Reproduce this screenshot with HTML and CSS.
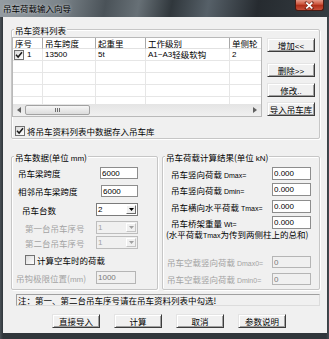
FILE: index.html
```html
<!DOCTYPE html>
<html>
    <head>
        <meta charset="utf-8" />
        <title>吊车荷载输入向导</title>
        <link rel="stylesheet" href="styles.css">
    </head>
    <body>
        <div class="window">
            <div class="titlebar">
                <span class="title">吊车荷载输入向导</span>
                <span class="close">
                    <svg width="29" height="11" viewBox="0 0 29 11">
                        <path d="M11 2.5 L17.5 8.5 M17.5 2.5 L11 8.5" stroke="#3a0c05" stroke-width="3" stroke-linecap="square" opacity="0.5"/>
                        <path d="M11 2.5 L17.5 8.5 M17.5 2.5 L11 8.5" stroke="#ffffff" stroke-width="1.8"/>
                    </svg>
                </span>
            </div>
            <div class="client">
                <div class="group group-list">
                    <div class="group-title">吊车资料列表</div>
                    <div class="list-area">
                        <div class="listview">
                            <div class="lv-grid">
                                <div class="lv-row lv-head">
                                    <span>序号</span><span>吊车跨度</span><span>起重里</span><span>工作级别</span><span>单侧轮</span>
                                </div>
                                <div class="lv-row">
                                    <span class="cell-check"><span class="box"><svg width="8" height="8" viewBox="0 0 8 8"><path d="M1 3.8 L3.1 6 L7 1.2" fill="none" stroke="#1b1b1b" stroke-width="1.5"/></svg></span><span class="lat">1</span></span>
                                    <span class="lat">13500</span><span class="lat">5t</span><span><span class="lat">A1~A3</span>轻级软钩</span><span class="lat">2</span>
                                </div>
                                <div class="lv-row"><span></span><span></span><span></span><span></span><span></span></div>
                                <div class="lv-row"><span></span><span></span><span></span><span></span><span></span></div>
                                <div class="lv-row"><span></span><span></span><span></span><span></span><span></span></div>
                                <div class="lv-row"><span></span><span></span><span></span><span></span><span></span></div>
                            </div>
                            <div class="hscroll">
                                <span class="arrow"><svg width="4" height="6" viewBox="0 0 4 6"><path d="M4 0 L0 3 L4 6 Z" fill="#606060"/></svg></span>
                                <span class="thumb"><span class="grip"></span></span>
                                <span class="track"></span>
                                <span class="arrow"><svg width="4" height="6" viewBox="0 0 4 6"><path d="M0 0 L4 3 L0 6 Z" fill="#606060"/></svg></span>
                            </div>
                        </div>
                        <div class="list-buttons">
                            <button class="btn-add">增加<span class="lat">&lt;&lt;</span></button>
                            <button class="btn-del">删除<span class="lat">&gt;&gt;</span></button>
                            <button class="btn-edit">修改<span class="lat">..</span></button>
                            <button class="btn-import">导入吊车库</button>
                        </div>
                    </div>
                    <label class="check save-check">
                        <span class="box"><svg width="8" height="8" viewBox="0 0 8 8"><path d="M1 3.8 L3.1 6 L7 1.2" fill="none" stroke="#1b1b1b" stroke-width="1.5"/></svg></span>
                        <span>将吊车资料列表中数据存入吊车库</span>
                    </label>
                </div>

                <div class="panels">
                    <div class="group group-data">
                        <div class="group-title">吊车数据(单位 <span class="lat">mm</span>)</div>
                        <div class="field f1">
                            <span class="lbl">吊车梁跨度</span>
                            <input class="edit w38" type="text" value="6000">
                        </div>
                        <div class="field f2">
                            <span class="lbl">相邻吊车梁跨度</span>
                            <input class="edit w37" type="text" value="6000">
                        </div>
                        <div class="field f3">
                            <span class="lbl">吊车台数</span>
                            <span class="combo"><span class="val lat">2</span><span class="drop"><svg width="5" height="3" viewBox="0 0 5 3"><path d="M0 0 L5 0 L2.5 3 Z" fill="#000"/></svg></span></span>
                        </div>
                        <div class="field f4 disabled">
                            <span class="lbl">第一台吊车序号</span>
                            <span class="combo"><span class="val lat">1</span><span class="drop"><svg width="5" height="3" viewBox="0 0 5 3"><path d="M0 0 L5 0 L2.5 3 Z" fill="#a0a0a0"/></svg></span></span>
                        </div>
                        <div class="field f5 disabled">
                            <span class="lbl">第二台吊车序号</span>
                            <span class="combo"><span class="val lat">1</span><span class="drop"><svg width="5" height="3" viewBox="0 0 5 3"><path d="M0 0 L5 0 L2.5 3 Z" fill="#a0a0a0"/></svg></span></span>
                        </div>
                        <label class="check f6">
                            <span class="box"></span>
                            <span>计算空车时的荷载</span>
                        </label>
                        <div class="field f7 disabled">
                            <span class="lbl">吊钩极限位置(<span class="lat">mm</span>)</span>
                            <input class="edit w40" type="text" value="1000" disabled>
                        </div>
                    </div>

                    <div class="group group-result">
                        <div class="group-title">吊车荷载计算结果(单位 <span class="lat">kN</span>)</div>
                        <div class="field r1">
                            <span class="lbl">吊车竖向荷载 <span class="sym">Dmax=</span></span>
                            <input class="edit" type="text" value="0.000">
                        </div>
                        <div class="field r2">
                            <span class="lbl">吊车竖向荷载 <span class="sym">Dmin=</span></span>
                            <input class="edit" type="text" value="0.000">
                        </div>
                        <div class="field r3">
                            <span class="lbl">吊车横向水平荷载 <span class="sym">Tmax=</span></span>
                            <input class="edit" type="text" value="0.000">
                        </div>
                        <div class="field r4">
                            <span class="lbl">吊车桥架重量 <span class="sym">Wt=</span></span>
                            <input class="edit" type="text" value="0.000">
                        </div>
                        <div class="hint">(水平荷载<span class="sym">Tmax</span>为传到两侧柱上的总和)</div>
                        <div class="field r5 disabled">
                            <span class="lbl">吊车空载竖向荷载 <span class="sym">Dmax0=</span></span>
                            <input class="edit" type="text" value="0" disabled>
                        </div>
                        <div class="field r6 disabled">
                            <span class="lbl">吊车空载竖向荷载 <span class="sym">Dmin0=</span></span>
                            <input class="edit" type="text" value="0" disabled>
                        </div>
                    </div>
                </div>

                <div class="note">注：第一、第二台吊车序号请在吊车资料列表中勾选!</div>

                <div class="actions">
                    <button>直接导入</button>
                    <button>计算</button>
                    <button>取消</button>
                    <button>参数说明</button>
                </div>
            </div>
        </div>
    </body>
</html>
```

FILE: styles.css
```css
* {
    box-sizing: border-box;
}
html,
body {
    margin: 0;
}
body {
    width: 329px;
    height: 339px;
    overflow: hidden;
    font-family: "Noto Sans CJK SC", sans-serif;
    font-size: 8.5px;
    color: #000000;
    background-color: #30363b;
}
.lat {
    font-family: "Liberation Sans", sans-serif;
    font-size: 8px;
}
.sym {
    font-family: "Liberation Sans", sans-serif;
    font-size: 7px;
}

/* window frame */
.window {
    height: 339px;
    display: flex;
    flex-direction: column;
    background: linear-gradient(90deg, #4a5157 0, #30363b 3px, #30363b 326px, #454c52 329px);
}
.titlebar {
    height: 17px;
    flex: none;
    display: flex;
    justify-content: space-between;
    align-items: flex-start;
    background: linear-gradient(100deg, #949ca2 0%, #7c858b 18%, #4a5258 32%, #677076 42%, #30373c 52%, #566068 63%, #262b30 78%, #353c41 100%);
}
.title {
    line-height: 17px;
    padding-left: 3px;
    text-shadow: 0 0 3px rgba(255, 255, 255, 0.7);
}
.close {
    width: 29px;
    height: 11px;
    margin-right: 5px;
    display: flex;
    border: 1px solid #4b1a12;
    border-top: none;
    border-radius: 0 0 3px 3px;
    background: linear-gradient(#e49a88 0%, #cf5840 40%, #b0301a 55%, #c8503a 100%);
}
.client {
    flex: 1;
    margin: 0 2px 6px 3px;
    padding: 12px 0 0 8px;
    background-color: #f0f0f0;
}

/* group boxes */
.group {
    border: 1px solid #c6c6c6;
    border-radius: 2px;
    box-shadow: inset 1px 1px 0 #ffffff, 1px 1px 0 #ffffff;
}
.group-title {
    width: max-content;
    height: 10px;
    line-height: 10px;
    margin: -5px 0 0 2px;
    padding: 0 1px;
    background-color: #f0f0f0;
    white-space: nowrap;
}
.group-list {
    width: 309px;
    height: 110px;
}
.list-area {
    display: flex;
    margin-top: 2px;
}

/* list view */
.listview {
    width: 250px;
    height: 80px;
    display: flex;
    flex-direction: column;
    border: 1px solid #b9b9b9;
    background-color: #ffffff;
}
.lv-grid {
    height: 66px;
    overflow: hidden;
}
.lv-row {
    display: grid;
    grid-template-columns: 30px 53px 50px 84px 61px;
    height: 12px;
    line-height: 11px;
    white-space: nowrap;
}
.lv-row > span {
    display: flex;
    align-items: center;
    padding-left: 2px;
    overflow: hidden;
    border-right: 1px solid #e6e6e6;
    border-bottom: 1px solid #e6e6e6;
}
.lv-head {
    height: 11px;
}
.lv-head > span {
    border-right-color: #a8a8a8;
    border-bottom-color: #e2e2e2;
}
.cell-check .box {
    margin: 0 3px 0 -1px;
}
.hscroll {
    height: 12px;
    display: flex;
    align-items: center;
    background: linear-gradient(#e4e4e4, #f0f0f0);
}
.hscroll .arrow {
    width: 12px;
    display: flex;
    justify-content: center;
}
.hscroll .thumb {
    width: 65px;
    height: 10px;
    display: flex;
    align-items: center;
    justify-content: center;
    border: 1px solid #a2a2a2;
    border-radius: 2px;
    background: linear-gradient(#f6f6f6, #dcdcdc);
}
.hscroll .grip {
    width: 5px;
    height: 4px;
    background: linear-gradient(90deg, #707070 1px, transparent 1px, transparent 2px, #707070 2px, #707070 3px, transparent 3px, transparent 4px, #707070 4px);
}
.hscroll .track {
    flex: 1;
}

/* buttons */
button {
    width: 48px;
    height: 14px;
    padding: 0;
    font-family: inherit;
    font-size: 8.5px;
    line-height: 12px;
    color: #000000;
    background-color: #f0f0f0;
    border: 1px solid;
    border-color: #e4e4e4 #3c3c3c #3c3c3c #e4e4e4;
    box-shadow: inset 1px 1px 0 #ffffff, inset -1px -1px 0 #a0a0a0;
    white-space: nowrap;
}
.list-buttons {
    display: flex;
    flex-direction: column;
    margin: 1px 0 0 5px;
}
.btn-del {
    margin-top: 11px;
}
.btn-edit {
    margin-top: 6px;
}
.btn-import {
    margin-top: 5px;
}

/* check boxes */
.check {
    display: flex;
    align-items: center;
    white-space: nowrap;
}
.box {
    width: 10px;
    height: 10px;
    flex: none;
    display: flex;
    align-items: center;
    justify-content: center;
    border: 1px solid #717171;
    background: linear-gradient(135deg, #dadada, #ffffff);
}
.check .box {
    margin-right: 2px;
}
.save-check {
    height: 10px;
    margin: 9px 0 0 3px;
}

/* data panels */
.panels {
    display: flex;
    margin-top: 17px;
}
.group-data {
    width: 147px;
    height: 134px;
}
.group-result {
    width: 158px;
    height: 134px;
    margin-left: 4px;
}
.field {
    display: flex;
    align-items: center;
    white-space: nowrap;
}
.field .lbl {
    flex: 1;
}
.edit {
    height: 100%;
    margin: 0;
    padding: 0 1px;
    font-family: "Liberation Sans", sans-serif;
    font-size: 8px;
    color: #000000;
    background-color: #ffffff;
    border: 1px solid #8d8d8d;
    border-radius: 0;
    outline: none;
}
.edit:disabled {
    color: #7a7a7a;
    background-color: #f0f0f0;
    border-color: #b5b5b5;
}
.w38 {
    width: 38px;
}
.w37 {
    width: 37px;
}
.w40 {
    width: 40px;
}
.combo {
    width: 42px;
    height: 100%;
    display: flex;
    border: 1px solid #7b7b7b;
    background-color: #ffffff;
}
.combo .val {
    flex: 1;
    padding-left: 1px;
    line-height: 11px;
}
.combo .drop {
    width: 10px;
    display: flex;
    align-items: center;
    justify-content: center;
    margin: 1px;
    border: 1px solid;
    border-color: #ffffff #6a6a6a #6a6a6a #ffffff;
    background-color: #f0f0f0;
}
.disabled {
    color: #a3a3a3;
}
.disabled .combo {
    background-color: #f0f0f0;
    border-color: #bdbdbd;
}
.disabled .combo .drop {
    border-color: #ffffff #c4c4c4 #c4c4c4 #ffffff;
}

.group-data .field {
    margin-right: 19px;
}
.group-data .f1 { margin-top: 5px; height: 12px; padding-left: 6px; }
.group-data .f2 { margin-top: 6px; height: 12px; padding-left: 6px; }
.group-data .f3 { margin-top: 6px; height: 13px; padding-left: 10px; }
.group-data .f4 { margin-top: 5px; height: 13px; padding-left: 13px; }
.group-data .f5 { margin-top: 2px; height: 13px; padding-left: 13px; }
.group-data .f6 { margin-top: 6px; height: 10px; padding-left: 13px; }
.group-data .f7 { margin-top: 6px; height: 13px; padding-left: 4px; margin-right: 21px; }

.group-result .field {
    margin-right: 8px;
}
.group-result .edit {
    width: 39px;
}
.group-result .r1 { margin-top: 5px; height: 13px; padding-left: 8px; }
.group-result .r2 { margin-top: 3px; height: 13px; padding-left: 8px; }
.group-result .r3 { margin-top: 4px; height: 13px; padding-left: 8px; }
.group-result .r4 { margin-top: 3px; height: 13px; padding-left: 8px; }
.group-result .r5 { margin-top: 17px; height: 12px; padding-left: 4px; }
.group-result .r6 { margin-top: 5px; height: 12px; padding-left: 4px; }
.hint {
    height: 10px;
    line-height: 10px;
    padding-left: 3px;
    white-space: nowrap;
}

/* bottom */
.note {
    width: 304px;
    height: 12px;
    margin: 4px 0 0 5px;
    padding-left: 1px;
    line-height: 10px;
    border: 1px solid;
    border-color: #a0a0a0 #dcdcdc #dcdcdc #a0a0a0;
    white-space: nowrap;
}
.actions {
    display: flex;
    gap: 14px;
    margin-top: 8px;
    padding-left: 41px;
}
```
